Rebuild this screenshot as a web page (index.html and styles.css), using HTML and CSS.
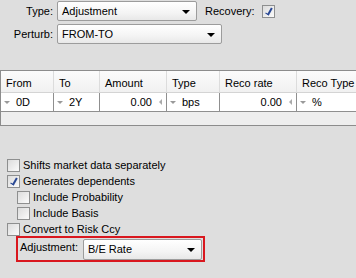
FILE: index.html
```html
<!DOCTYPE html>
<html lang="en">
<head>
    <meta charset="UTF-8">
    <title>Perturbation</title>
    <link rel="stylesheet" href="styles.css">
</head>
<body>
    <div class="panel">
        <div class="top">
            <div class="row">
                <span class="lbl">Type:</span>
                <div class="combo type-combo">Adjustment<span class="arrow"></span></div>
                <span class="rec-lbl">Recovery:</span>
                <span class="check on"></span>
            </div>
            <div class="row">
                <span class="lbl">Perturb:</span>
                <div class="combo perturb-combo">FROM-TO<span class="arrow"></span></div>
            </div>
        </div>

        <div class="grid">
            <div class="hd">From</div>
            <div class="hd">To</div>
            <div class="hd">Amount</div>
            <div class="hd">Type</div>
            <div class="hd">Reco rate</div>
            <div class="hd">Reco Type</div>

            <div class="cell"><span class="drop"></span>0D</div>
            <div class="cell"><span class="drop"></span>2Y</div>
            <div class="cell num">0.00<span class="spin"></span></div>
            <div class="cell"><span class="drop"></span>bps</div>
            <div class="cell num">0.00<span class="spin"></span></div>
            <div class="cell"><span class="drop"></span>%</div>

            <div class="filler"></div>
        </div>

        <div class="options">
            <div class="opt"><span class="check"></span>Shifts market data separately</div>
            <div class="opt"><span class="check on"></span>Generates dependents</div>
            <div class="opt sub"><span class="check"></span>Include Probability</div>
            <div class="opt sub"><span class="check"></span>Include Basis</div>
            <div class="opt"><span class="check"></span>Convert to Risk Ccy</div>
            <div class="highlight">
                <span class="adj-lbl">Adjustment:</span>
                <div class="combo adj-combo">B/E Rate<span class="arrow"></span></div>
            </div>
        </div>
    </div>
</body>
</html>
```

FILE: styles.css
```css
body {
    margin: 0;
    background-color: #dedede;
    font-family: 'Liberation Sans', Arial, sans-serif;
    font-size: 11px;
    color: #000;
}
.panel {
    width: 356px;
    height: 278px;
    overflow: hidden;
}
.top {
    padding-top: 1px;
    display: flex;
    flex-direction: column;
    gap: 3px;
}
.row {
    display: flex;
    align-items: center;
    height: 20px;
}
.lbl {
    width: 53px;
    text-align: right;
    margin-right: 4px;
}
.combo {
    position: relative;
    box-sizing: border-box;
    height: 20px;
    line-height: 18px;
    padding-left: 4px;
    border: 1px solid #9c9c9c;
    border-radius: 2px;
    background: linear-gradient(#ffffff, #f4f4f4 60%, #e8e8e8);
}
.arrow {
    position: absolute;
    right: 6px;
    top: 8px;
    border-left: 4px solid transparent;
    border-right: 4px solid transparent;
    border-top: 4px solid #000;
}
.type-combo {
    width: 140px;
}
.perturb-combo {
    width: 165px;
}
.rec-lbl {
    margin-left: 8px;
    margin-right: 7px;
}
.check {
    position: relative;
    box-sizing: border-box;
    display: inline-block;
    width: 13px;
    height: 13px;
    border: 1px solid #8e8f8f;
    background: linear-gradient(135deg, #dcdcdc, #fbfbfb);
}
.check.on::after {
    content: "";
    position: absolute;
    left: 4px;
    top: 1px;
    width: 2px;
    height: 7px;
    border-right: 2px solid #2a4894;
    border-bottom: 1px solid #2a4894;
    transform: rotate(30deg);
}

.grid {
    margin-top: 26px;
    width: 380px;
    height: 56px;
    box-sizing: border-box;
    border: 1px solid #8c8c8c;
    background-color: #eeeeee;
    display: grid;
    grid-template-columns: 53px 46px 67px 53px 77px 1fr;
    grid-template-rows: 22px 19px 1fr;
}
.hd {
    padding: 2px 0 0 5px;
    line-height: 20px;
    background: linear-gradient(#fbfbfb, #f1f1f1);
    border-right: 1px solid #dcdcdc;
    border-bottom: 1px solid #d4d4d4;
}
.cell {
    position: relative;
    line-height: 18px;
    padding-left: 15px;
    background-color: #fff;
    border-right: 1px solid #8f8f8f;
    border-bottom: 1px solid #8f8f8f;
}
.drop {
    position: absolute;
    left: 3px;
    top: 8px;
    border-left: 3px solid transparent;
    border-right: 3px solid transparent;
    border-top: 3px solid #999;
}
.num {
    text-align: right;
    padding-left: 0;
    padding-right: 14px;
}
.spin {
    position: absolute;
    right: 4px;
    top: 6px;
    border-top: 3px solid transparent;
    border-bottom: 3px solid transparent;
    border-right: 3px solid #aaa;
}
.filler {
    grid-column: 1 / -1;
}

.options {
    margin-top: 31px;
    padding-left: 7px;
}
.opt {
    display: flex;
    align-items: center;
    height: 16px;
}
.opt .check {
    margin-right: 3px;
}
.sub {
    padding-left: 10px;
}
.highlight {
    margin-top: -1px;
    margin-left: 9px;
    width: 189px;
    height: 26px;
    box-sizing: border-box;
    border: 2px solid #d9171e;
    display: flex;
    align-items: flex-start;
    padding: 1px 0 0 2px;
}
.adj-lbl {
    width: 63px;
    padding-top: 2px;
}
.adj-combo {
    width: 119px;
    height: 21px;
}
```
